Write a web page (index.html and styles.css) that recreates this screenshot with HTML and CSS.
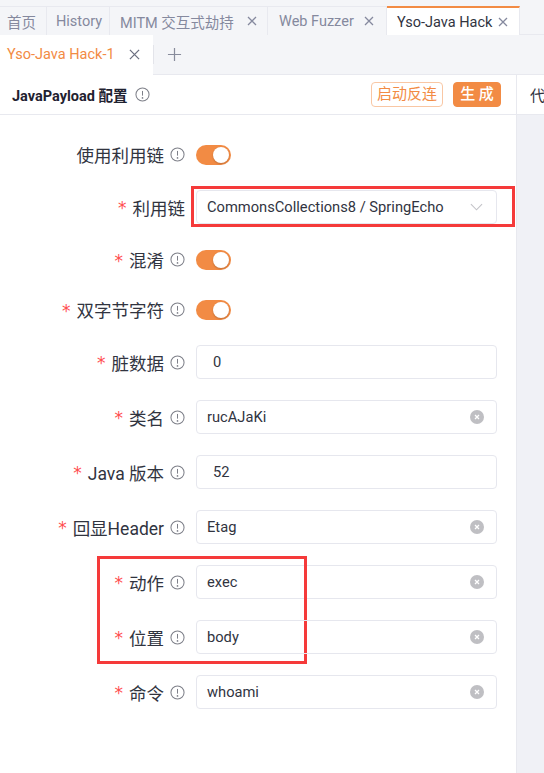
FILE: index.html
```html
<!DOCTYPE html>
<html lang="zh-CN">
<head>
<meta charset="utf-8">
<link rel="stylesheet" href="styles.css">
</head>
<body>
<div class="app">
  <div class="tabbar">
    <div class="tab t-home">首页</div>
    <div class="tab t-hist">History</div>
    <div class="tab t-mitm">MITM 交互式劫持<svg class="x" viewBox="0 0 10 10"><path d="M1 1L9 9M9 1L1 9"/></svg></div>
    <div class="tab t-fuzz">Web Fuzzer<svg class="x" viewBox="0 0 10 10"><path d="M1 1L9 9M9 1L1 9"/></svg></div>
    <div class="tab active t-yso">Yso-Java Hack<svg class="x" viewBox="0 0 10 10"><path d="M1 1L9 9M9 1L1 9"/></svg></div>
  </div>
  <div class="subbar">
    <div class="subtab">Yso-Java Hack-1<svg class="x big" viewBox="0 0 12 12"><path d="M1 1L11 11M11 1L1 11"/></svg></div>
    <div class="subsep"></div>
    <svg class="plus" viewBox="0 0 16 16"><path d="M8 1V15M1 8H15"/></svg>
  </div>
  <div class="main">
    <div class="left">
      <div class="header">
        <div class="title">JavaPayload 配置<svg class="info hinfo" viewBox="0 0 16 16"><circle cx="8" cy="8" r="7"/><path d="M8 4.2V9.2"/><circle class="dot" cx="8" cy="11.6" r="0.9"/></svg></div>
        <div class="actions">
          <button class="btn ghost">启动反连</button>
          <button class="btn primary">生 成</button>
        </div>
      </div>
      <div class="form">
        <div class="row toggle-row">
          <div class="label">使用利用链<svg class="info" viewBox="0 0 16 16"><circle cx="8" cy="8" r="7"/><path d="M8 4.2V9.2"/><circle class="dot" cx="8" cy="11.6" r="0.9"/></svg></div>
          <div class="control"><span class="switch"><span class="knob"></span></span></div>
        </div>
        <div class="row hl-wrap">
          <div class="label"><span class="req">*</span>利用链</div>
          <div class="control"><div class="select">CommonsCollections8 / SpringEcho<svg class="chev" viewBox="0 0 14 8"><path d="M1 1L7 7L13 1"/></svg></div></div>
          <div class="hl hl1"></div>
        </div>
        <div class="row toggle-row">
          <div class="label"><span class="req">*</span>混淆<svg class="info" viewBox="0 0 16 16"><circle cx="8" cy="8" r="7"/><path d="M8 4.2V9.2"/><circle class="dot" cx="8" cy="11.6" r="0.9"/></svg></div>
          <div class="control"><span class="switch"><span class="knob"></span></span></div>
        </div>
        <div class="row toggle-row">
          <div class="label"><span class="req">*</span>双字节字符<svg class="info" viewBox="0 0 16 16"><circle cx="8" cy="8" r="7"/><path d="M8 4.2V9.2"/><circle class="dot" cx="8" cy="11.6" r="0.9"/></svg></div>
          <div class="control"><span class="switch"><span class="knob"></span></span></div>
        </div>
        <div class="row">
          <div class="label"><span class="req">*</span>脏数据<svg class="info" viewBox="0 0 16 16"><circle cx="8" cy="8" r="7"/><path d="M8 4.2V9.2"/><circle class="dot" cx="8" cy="11.6" r="0.9"/></svg></div>
          <div class="control"><div class="input num">0</div></div>
        </div>
        <div class="row">
          <div class="label"><span class="req">*</span>类名<svg class="info" viewBox="0 0 16 16"><circle cx="8" cy="8" r="7"/><path d="M8 4.2V9.2"/><circle class="dot" cx="8" cy="11.6" r="0.9"/></svg></div>
          <div class="control"><div class="input">rucAJaKi<svg class="clear" viewBox="0 0 14 14"><circle cx="7" cy="7" r="7"/><path d="M5 5L9 9M9 5L5 9"/></svg></div></div>
        </div>
        <div class="row">
          <div class="label"><span class="req">*</span>Java 版本<svg class="info" viewBox="0 0 16 16"><circle cx="8" cy="8" r="7"/><path d="M8 4.2V9.2"/><circle class="dot" cx="8" cy="11.6" r="0.9"/></svg></div>
          <div class="control"><div class="input num">52</div></div>
        </div>
        <div class="row">
          <div class="label"><span class="req">*</span>回显Header<svg class="info" viewBox="0 0 16 16"><circle cx="8" cy="8" r="7"/><path d="M8 4.2V9.2"/><circle class="dot" cx="8" cy="11.6" r="0.9"/></svg></div>
          <div class="control"><div class="input">Etag<svg class="clear" viewBox="0 0 14 14"><circle cx="7" cy="7" r="7"/><path d="M5 5L9 9M9 5L5 9"/></svg></div></div>
        </div>
        <div class="row hl-wrap">
          <div class="label"><span class="req">*</span>动作<svg class="info" viewBox="0 0 16 16"><circle cx="8" cy="8" r="7"/><path d="M8 4.2V9.2"/><circle class="dot" cx="8" cy="11.6" r="0.9"/></svg></div>
          <div class="control"><div class="input">exec<svg class="clear" viewBox="0 0 14 14"><circle cx="7" cy="7" r="7"/><path d="M5 5L9 9M9 5L5 9"/></svg></div></div>
          <div class="hl hl2"></div>
        </div>
        <div class="row">
          <div class="label"><span class="req">*</span>位置<svg class="info" viewBox="0 0 16 16"><circle cx="8" cy="8" r="7"/><path d="M8 4.2V9.2"/><circle class="dot" cx="8" cy="11.6" r="0.9"/></svg></div>
          <div class="control"><div class="input">body<svg class="clear" viewBox="0 0 14 14"><circle cx="7" cy="7" r="7"/><path d="M5 5L9 9M9 5L5 9"/></svg></div></div>
        </div>
        <div class="row">
          <div class="label"><span class="req">*</span>命令<svg class="info" viewBox="0 0 16 16"><circle cx="8" cy="8" r="7"/><path d="M8 4.2V9.2"/><circle class="dot" cx="8" cy="11.6" r="0.9"/></svg></div>
          <div class="control"><div class="input">whoami<svg class="clear" viewBox="0 0 14 14"><circle cx="7" cy="7" r="7"/><path d="M5 5L9 9M9 5L5 9"/></svg></div></div>
        </div>
      </div>
    </div>
    <div class="right">
      <div class="rhead">代</div>
      <div class="rbody"></div>
    </div>
  </div>
</div>
</body>
</html>
```

FILE: styles.css
```css
* { box-sizing: border-box; }
html, body { margin: 0; padding: 0; }
body {
  width: 544px;
  height: 773px;
  overflow: hidden;
  background: #fff;
  font-family: Roboto, "Noto Sans CJK SC", sans-serif;
  color: #31343f;
}
.app { display: flex; flex-direction: column; height: 773px; }

.tabbar {
  height: 35px;
  padding-top: 6px;
  background: #f4f5f8;
  display: flex;
  border-bottom: 1px solid #e8e9ef;
}
.tab {
  height: 29px;
  display: flex;
  align-items: center;
  justify-content: space-between;
  padding: 0 10px;
  font-size: 14.5px;
  color: #85899e;
  border-top: 1px solid #e8e9ef;
  border-right: 1px solid #e8e9ef;
  background: #f4f5f8;
  white-space: nowrap;
  flex: none;
}
.t-home { width: 47px; padding-left: 7px; }
.t-hist { width: 63px; padding-left: 9px; }
.t-mitm { width: 158px; padding-left: 10px; padding-right: 10px; }
.t-fuzz { width: 119px; padding-left: 11px; padding-right: 12px; }
.t-yso { width: 133px; padding-left: 10px; padding-right: 11px; }
.tab.active {
  background: #fff;
  color: #31343f;
  border-top: 2px solid #f28b44;
  height: 30px;
  margin-bottom: -1px;
}
.x { width: 10px; height: 10px; flex: none; fill: none; stroke: #85899e; stroke-width: 1.3; }
.x.big { width: 11px; height: 11px; stroke: #6b6f80; stroke-width: 1.4; }

.subbar {
  height: 40px;
  background: #f4f5f8;
  display: flex;
  align-items: center;
  border-bottom: 1px solid #e8e9ef;
}
.subtab {
  height: 40px;
  width: 153px;
  background: #fff;
  display: flex;
  align-items: center;
  gap: 14px;
  padding-left: 7px;
  font-size: 14.5px;
  color: #f28b44;
}
.subsep { width: 1px; height: 19px; background: #e3e4ea; }
.plus { width: 15px; height: 15px; margin-left: 13px; fill: none; stroke: #888c9c; stroke-width: 1.3; }

.main { flex: 1; display: flex; min-height: 0; }
.left { width: 517px; flex: none; border-right: 1px solid #e8e9ef; background: #fff; }
.right { flex: 1; min-width: 0; display: flex; flex-direction: column; overflow: hidden; }
.rhead {
  height: 40px;
  background: #fff;
  border-bottom: 1px solid #e8e9ef;
  padding-left: 13px;
  display: flex;
  align-items: center;
  font-size: 15px;
  white-space: nowrap;
}
.rbody { flex: 1; background: #f0f1f6; }

.header {
  height: 40px;
  border-bottom: 1px solid #e8e9ef;
  display: flex;
  align-items: center;
  justify-content: space-between;
  padding: 0 15px 0 12px;
}
.title {
  font-size: 14.5px;
  font-weight: 700;
  display: flex;
  align-items: center;
  gap: 7px;
  color: #1f2230;
}
.actions { display: flex; gap: 10px; }
.btn {
  height: 25px;
  border-radius: 4px;
  font-family: inherit;
  font-size: 15px;
  padding: 0;
  line-height: 23px;
  white-space: nowrap;
  text-align: center;
  cursor: pointer;
}
.btn.ghost { background: #fff; border: 1px solid #f9c7a4; color: #f28b44; width: 72px; }
.btn.primary { background: #f28b44; border: 1px solid #f28b44; color: #fff; width: 48px; font-weight: 500; }

.info { width: 15px; height: 15px; flex: none; fill: none; stroke: #7d7f88; stroke-width: 1.1; }
.info .dot { fill: #7d7f88; stroke: none; }

.form {
  padding-top: 25px;
  display: flex;
  flex-direction: column;
  gap: 21px;
}
.row {
  display: flex;
  align-items: center;
  height: 34px;
  position: relative;
}
.row.toggle-row { height: 29px; }
.label {
  width: 185px;
  flex: none;
  display: flex;
  align-items: center;
  justify-content: flex-end;
  font-size: 17.5px;
  color: #31343f;
  white-space: nowrap;
}
.label .info { margin-left: 6px; }
.req { color: #ff4d4f; margin-right: 6px; font-size: 17px; font-family: "DejaVu Sans", sans-serif; position: relative; top: 1px; }
.control { margin-left: 11px; width: 301px; display: flex; align-items: center; }

.switch {
  width: 35px;
  height: 20px;
  border-radius: 10px;
  background: #f28b44;
  position: relative;
  display: inline-block;
}
.knob {
  position: absolute;
  top: 2px;
  right: 2px;
  width: 16px;
  height: 16px;
  border-radius: 50%;
  background: #fff;
  box-shadow: 0 1px 2px rgba(0,0,0,0.2);
}

.select, .input {
  width: 301px;
  height: 34px;
  border: 1px solid #e6e7ee;
  border-radius: 4px;
  display: flex;
  align-items: center;
  justify-content: space-between;
  padding: 0 12px 0 10px;
  font-size: 14.7px;
  color: #31343f;
}
.input.num { padding-left: 16px; }
.chev { width: 13px; height: 8px; fill: none; stroke: #c3c3c8; stroke-width: 1.2; margin-right: 1px; }
.clear { width: 14px; height: 14px; }
.clear circle { fill: #bfbfc3; }
.clear path { stroke: #fff; stroke-width: 1.3; fill: none; }

.hl { position: absolute; border: 3px solid #f53a3a; pointer-events: none; }
.hl1 { left: 191px; top: -4px; width: 324px; height: 41px; }
.hl2 { left: 97px; top: -9px; width: 210px; height: 108px; }
```
